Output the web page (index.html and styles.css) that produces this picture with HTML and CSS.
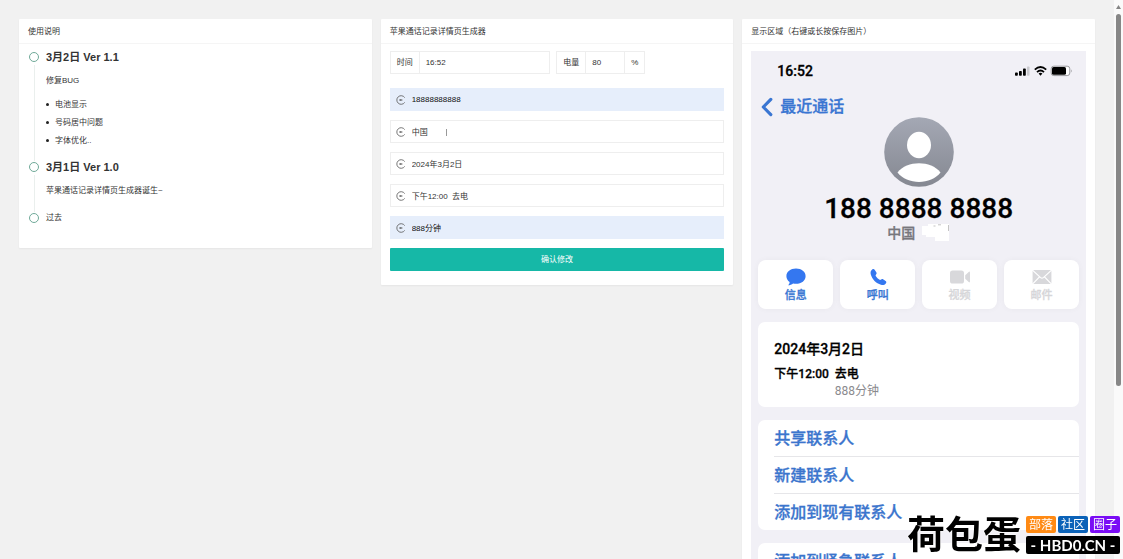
FILE: index.html
```html
<!DOCTYPE html>
<html lang="zh-CN">
<head>
<meta charset="utf-8">
<meta name="viewport" content="width=device-width, initial-scale=1">
<title>苹果通话记录详情页生成器</title>
<link rel="stylesheet" href="styles.css">
</head>
<body>
<svg class="defs" width="0" height="0" aria-hidden="true">
  <symbol id="enter" viewBox="0 0 10 10"><path d="M8.7 2.6A4.3 4.3 0 1 0 8.7 7.4M3 5h3.500M4.800 4V6" fill="none" stroke="#555" stroke-width=".8"/></symbol>
</svg>
<div class="app">
  <main class="columns">
    <section class="card">
      <h2 class="card-title">使用说明</h2>
      <ul class="timeline">
        <li class="event">
          <span class="dot"></span>
          <div class="event-body">
            <h3>3月2日 Ver 1.1</h3>
            <p>修复BUG</p>
            <ul class="notes"><li>电池显示</li><li>号码居中问题</li><li>字体优化..</li></ul>
          </div>
        </li>
        <li class="event">
          <span class="dot"></span>
          <div class="event-body">
            <h3>3月1日 Ver 1.0</h3>
            <p>苹果通话记录详情页生成器诞生~</p>
          </div>
        </li>
        <li class="event">
          <span class="dot"></span>
          <div class="event-body past">过去</div>
        </li>
      </ul>
    </section>

    <section class="card">
      <h2 class="card-title">苹果通话记录详情页生成器</h2>
      <form class="form">
        <div class="pair">
          <div class="group time"><label for="time">时间</label><input id="time" value="16:52"></div>
          <div class="group power"><label for="power">电量</label><input id="power" value="80"><span class="unit">%</span></div>
        </div>
        <label class="field filled"><svg><use href="#enter"/></svg><input aria-label="号码" value="18888888888"></label>
        <label class="field"><svg><use href="#enter"/></svg><input aria-label="归属地" value="中国"><span class="bar"></span></label>
        <label class="field"><svg><use href="#enter"/></svg><input aria-label="日期" value="2024年3月2日"></label>
        <label class="field"><svg><use href="#enter"/></svg><input aria-label="通话" value="下午12:00&nbsp; 去电"></label>
        <label class="field filled"><svg><use href="#enter"/></svg><input aria-label="时长" value="888分钟"></label>
        <button class="submit" type="button">确认修改</button>
      </form>
    </section>

    <section class="card">
      <h2 class="card-title">显示区域（右键或长按保存图片）</h2>
      <div class="phone">
        <div class="status">
          <span>16:52</span>
          <svg width="58" height="12" viewBox="0 0 58 12" aria-hidden="true">
            <rect x="0" y="7.5" width="2.8" height="3.2" rx=".8"/><rect x="4" y="6" width="2.8" height="4.7" rx=".8"/><rect x="8" y="3.6" width="2.8" height="7.1" rx=".8"/><rect x="12" y="1.4" width="2.5" height="9.3" rx=".8" fill="#c9c9ce"/>
            <g fill="none" stroke="#000" stroke-width="1.8"><path d="M19.8 4.6Q25.5-.6 31.2 4.6M22 7.1Q25.5 3.8 29 7.1"/></g><path d="M23.6 8.6Q25.5 7 27.4 8.6L25.5 10.7Z"/>
            <rect x="36.2" y="1.2" width="18.6" height="9.4" rx="2.6" fill="#fff" stroke="#98989c"/><rect x="37" y="2" width="14" height="7.8" rx="1.6"/><path d="M56 4.2Q57.6 5.9 56 7.6Z" fill="#98989c"/>
          </svg>
        </div>
        <a class="back" href="#">
          <svg width="12" height="20" viewBox="0 0 12 20" aria-hidden="true"><path d="M9.8 2.4 2.3 10l7.5 7.6" fill="none" stroke="#3a76d2" stroke-width="3.2" stroke-linecap="round" stroke-linejoin="round"/></svg>最近通话</a>
        <div class="person">
          <svg width="70" height="70" viewBox="0 0 70 70" aria-hidden="true">
            <defs><linearGradient id="shade" x2="0" y2="1"><stop stop-color="#a4a8b4"/><stop offset="1" stop-color="#858891"/></linearGradient></defs>
            <circle cx="35" cy="35" r="34.8" fill="url(#shade)"/><ellipse cx="35" cy="28" rx="12" ry="13.2" fill="#fff"/><path d="M13.5 55.5C23 43.3 47 43.3 56.5 55.5C47 68 23 68 13.5 55.5Z" fill="#fff"/>
          </svg>
          <strong>188 8888 8888</strong>
          <div class="region">中国<svg width="29" height="17" viewBox="0 0 29 17" aria-hidden="true"><path d="M1 2H7V0H28V17H14V13H5V11H1Z" fill="#fff"/><path d="M12.5 2h2M17 .8h3M27.5 1v6" stroke="#aaa" stroke-width=".7"/></svg></div>
        </div>
        <div class="actions">
          <button type="button"><svg viewBox="0 0 22 18"><path d="M11 .6c5.5 0 9.6 3.3 9.6 7.6S16.500 15.800 11 15.800c-1 0-2-.1-2.900-.3-1.300 1.100-3.200 1.800-5 1.800 1-.9 1.500-1.900 1.500-3.200C2.800 12.700 1.400 10.700 1.400 8.200 1.400 3.900 5.500.6 11 .6Z"/></svg>信息</button>
          <button type="button"><svg viewBox="0 0 22 18"><path d="M5.200 1.600c1-.8 1.900-.6 2.600.4l1.500 2.300c.6.9.4 1.600-.4 2.500-.5.6-.3 1 .2 1.700.8 1.200 1.900 2.300 3.100 3.100.8.5 1.200.6 1.800 0 .8-.7 1.500-.8 2.400-.2l2.200 1.500c.9.7 1 1.600.2 2.500-1.200 1.500-2.800 2.100-4.800 1.400C9 15.200 5.300 11.400 3.800 6.500 3.200 4.500 3.700 2.700 5.200 1.600Z"/></svg>呼叫</button>
          <button type="button" disabled><svg viewBox="0 0 22 18"><rect x="1" y="2.400" width="14" height="13.200" rx="2.600"/><path d="M16.200 7.300 19.700 3.900Q21 3 21 4.700v8.600q0 1.700-1.300.8L16.200 10.700Z"/></svg>视频</button>
          <button type="button" disabled><svg viewBox="0 0 22 18"><rect x="1.600" y="2" width="18.800" height="14" rx="1.600"/><path d="M2 2.600 9.600 9.600q1.400 1.200 2.800 0L20 2.600M2 15.600l6.500-6.700M20 15.600l-6.500-6.700" fill="none" stroke="#fff" stroke-width="1.200"/></svg>邮件</button>
        </div>
        <div class="panel call">
          <div class="date">2024年3月2日</div>
          <div class="detail"><span>下午12:00</span><span>去电</span><span class="length">888分钟</span></div>
        </div>
        <nav class="panel links"><a href="#">共享联系人</a><a href="#">新建联系人</a><a href="#">添加到现有联系人</a></nav>
        <nav class="panel links"><a href="#">添加到紧急联系人</a></nav>
      </div>
    </section>
  </main>
  <div class="scrollbar" aria-hidden="true"><svg width="9" height="14" viewBox="0 0 9 14"><path d="M4.500 5 7 9H2Z" fill="#858585"/></svg><span class="thumb"></span></div>
  <div class="watermark">
    <span class="brand">荷包蛋</span>
    <div class="tags"><span class="tag orange">部落</span><span class="tag blue">社区</span><span class="tag purple">圈子</span><span class="domain">- HBD0.CN -</span></div>
  </div>
</div>
</body>
</html>
```
FILE: styles.css
```css
* { box-sizing: border-box; }
body { margin: 0; background: #f1f1f1; color: #333; font: 8px/18px "Liberation Sans", "Noto Sans CJK SC", sans-serif; }
h2, h3, p, ul { margin: 0; padding: 0; }
ul { list-style: none; }
a { color: inherit; text-decoration: none; }
input, button { font: inherit; color: inherit; border: 0; margin: 0; padding: 0; background: none; }
.defs { position: absolute; }
.app { display: flex; height: 100vh; overflow: hidden; }
.columns { flex: 1; display: grid; grid-template-columns: repeat(3, minmax(0, 1fr)); gap: 9px; align-items: start; padding: 19px; }
.card { background: #fff; border-radius: 1px; box-shadow: 0 1px 2px #0000000d; }
.card-title { height: 25px; padding: 0 9px; border-bottom: 1px solid #f5f5f5; font-size: 8px; font-weight: 400; line-height: 26px; }

.timeline { padding: 5px 9px 12px; }
.event { position: relative; display: grid; grid-template-columns: 12px 1fr; gap: 6px; padding-bottom: 10px; }
.event:not(:last-child)::before { content: ""; position: absolute; left: 6px; top: 16px; bottom: -2px; width: 1px; background: #eaefed; }
.dot { width: 10px; height: 10px; margin: 3px 1px; border: 1px solid #70aa99; border-radius: 50%; }
.event h3 { font-size: 11px; line-height: 16px; }
.event p { margin-top: 6px; line-height: 19px; }
.past { line-height: 16px; }
.notes { margin-top: 5px; padding-left: 9px; }
.notes li { position: relative; line-height: 19px; height: 18px; }
.notes li::before { content: ""; position: absolute; left: -9px; top: 8px; width: 3px; height: 3px; border-radius: 50%; background: #222; }

.form { display: grid; gap: 9px; padding: 7px 9px 14px; }
.pair { display: flex; gap: 6px; margin-bottom: 5px; }
.group { display: flex; height: 23px; border: 1px solid #eee; line-height: 21px; }
.group label { flex: none; width: 29px; text-align: center; border-right: 1px solid #eee; }
.group input { flex: 1; min-width: 0; padding: 0 6px; }
.time { width: 48%; }
.power { width: 89px; }
.unit { width: 20px; text-align: center; border-left: 1px solid #eee; }
.field { position: relative; display: flex; align-items: center; gap: 6px; height: 23px; padding: 0 5px; border: 1px solid #eee; }
.field svg { flex: none; width: 10px; height: 10px; }
.field input { flex: 1; min-width: 0; height: 21px; }
.filled { background: #e6eefb; border-color: #e6eefb; color: #111; }
.bar { position: absolute; left: 55px; top: 8px; width: 1px; height: 7px; background: #999; }
.submit { height: 23px; border-radius: 1px; background: #16b8a7; color: #fff; }

.phone { margin: 7px 9px 0; padding: 0 7px; background: #f1f0f6; color: #000; font-family: Roboto, "Noto Sans CJK SC", sans-serif; font-weight: 500; -webkit-text-stroke: 0.3px currentColor; }
.status { display: flex; justify-content: space-between; align-items: center; height: 40px; padding: 0 6px 0 19px; font-size: 14px; }
.back { display: flex; align-items: center; gap: 7px; height: 26px; padding: 5px 0 0 3px; color: #3a76d2; font-size: 16px; line-height: 20px; }
.person { display: flex; flex-direction: column; align-items: center; }
.person strong { font-size: 28px; font-weight: 500; line-height: 44px; }
.region { display: flex; gap: 6px; height: 29px; margin-top: -7px; color: #77777c; font-size: 14px; line-height: 18px; }
.actions { display: grid; grid-template-columns: repeat(4, 1fr); gap: 7px; margin-top: 7px; }
.actions button { display: flex; flex-direction: column; align-items: center; gap: 2px; height: 49px; padding-top: 8px; border-radius: 8px; background: #fff; box-shadow: 0 0 6px #0000000a; color: #3876d3; font-size: 11px; line-height: 16px; }
.actions svg { width: 22px; height: 18px; fill: #3477f0; }
.actions button:disabled { color: #d6d6d9; }
.actions button:disabled svg { fill: #d8d8db; }
.panel { margin-top: 13px; border-radius: 7px; background: #fff; }
.call { height: 85px; padding: 18px 16px; }
.date { font-size: 14px; line-height: 18px; }
.detail { display: grid; grid-template-columns: max-content 1fr; column-gap: 6px; margin-top: 8px; font-size: 12px; line-height: 17px; }
.length { grid-column: 2; color: #8a8a8e; font-weight: 400; -webkit-text-stroke: 0; }
.links { padding-left: 16px; color: #3b75cd; font-size: 16px; line-height: 38px; }
.links a { display: block; height: 37px; border-bottom: 1px solid #e6e6e9; }
.links a:last-child { height: 36px; border: 0; }

.scrollbar { width: 9px; background: #fafafa; display: flex; flex-direction: column; align-items: center; }
.thumb { width: 5px; height: 66.5%; border-radius: 3px; background: #878787; }
.watermark { position: fixed; right: 3px; bottom: 5px; display: flex; align-items: center; gap: 5px; font-family: Lato, "Noto Sans CJK SC", sans-serif; }
.brand { color: #000; font-size: 38px; font-weight: 700; line-height: 34px; padding-bottom: 4px; text-shadow: 0 0 2px #fff, 0 0 2px #fff; }
.tags { display: grid; grid-template-columns: repeat(3, 30px); gap: 3px 2px; color: #fff; text-align: center; }
.tag { border-radius: 2px; font-size: 12px; line-height: 17px; }
.orange { background: #ff8a14; }
.blue { background: #0b62b8; }
.purple { background: #7a0cf5; }
.domain { grid-column: 1 / -1; border-radius: 2px; background: #000; font-size: 15px; font-weight: 700; line-height: 18px; }
```
